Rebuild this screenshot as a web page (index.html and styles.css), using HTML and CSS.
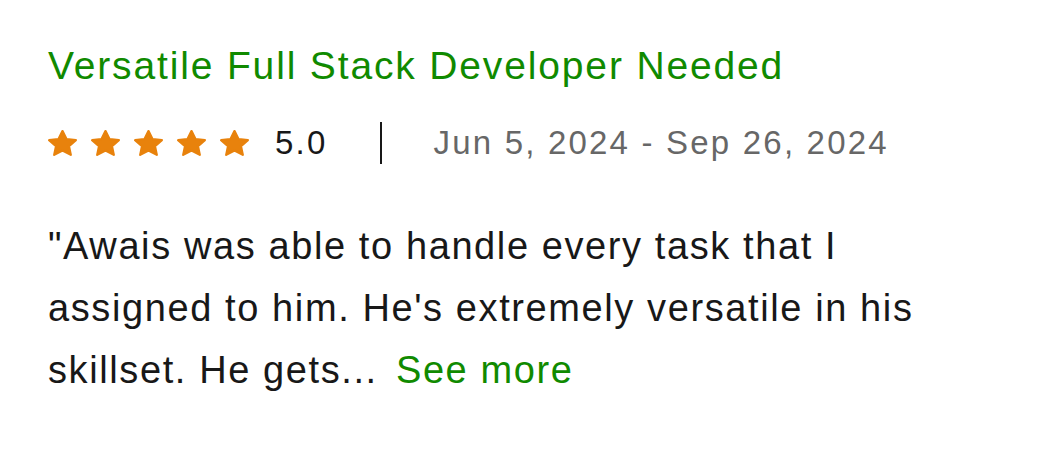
FILE: index.html
```html
<!DOCTYPE html>
<html>
<head>
<meta charset="utf-8">
<link rel="stylesheet" href="styles.css">
</head>
<body>
<div class="card">
  <h2 class="title">Versatile Full Stack Developer Needed</h2>
  <div class="meta">
    <div class="stars">
      <svg class="star" viewBox="1.7 1.4 20.6 19.7" preserveAspectRatio="none"><path d="M12 2.2l2.9 6.1 6.6.8-4.9 4.6 1.3 6.6L12 17l-5.9 3.3 1.3-6.6L2.5 9.1l6.6-.8z"/></svg>
      <svg class="star" viewBox="1.7 1.4 20.6 19.7" preserveAspectRatio="none"><path d="M12 2.2l2.9 6.1 6.6.8-4.9 4.6 1.3 6.6L12 17l-5.9 3.3 1.3-6.6L2.5 9.1l6.6-.8z"/></svg>
      <svg class="star" viewBox="1.7 1.4 20.6 19.7" preserveAspectRatio="none"><path d="M12 2.2l2.9 6.1 6.6.8-4.9 4.6 1.3 6.6L12 17l-5.9 3.3 1.3-6.6L2.5 9.1l6.6-.8z"/></svg>
      <svg class="star" viewBox="1.7 1.4 20.6 19.7" preserveAspectRatio="none"><path d="M12 2.2l2.9 6.1 6.6.8-4.9 4.6 1.3 6.6L12 17l-5.9 3.3 1.3-6.6L2.5 9.1l6.6-.8z"/></svg>
      <svg class="star" viewBox="1.7 1.4 20.6 19.7" preserveAspectRatio="none"><path d="M12 2.2l2.9 6.1 6.6.8-4.9 4.6 1.3 6.6L12 17l-5.9 3.3 1.3-6.6L2.5 9.1l6.6-.8z"/></svg>
    </div>
    <span class="score">5.0</span>
    <span class="divider"></span>
    <span class="dates">Jun 5, 2024 - Sep 26, 2024</span>
  </div>
  <p class="review"><span class="quote">"Awais was able to handle every task that I assigned to him. He's extremely versatile in his skillset. He gets...</span> <a class="more" href="#">See more</a></p>
</div>
</body>
</html>
```
FILE: styles.css
```css
html, body {
  margin: 0;
  padding: 0;
  background: #ffffff;
}
body {
  font-family: "Liberation Sans", Arial, sans-serif;
  color: #181818;
}
.card {
  padding: 40px 48px 0 48px;
}
.title {
  margin: 0;
  font-size: 39px;
  letter-spacing: 1.85px;
  font-weight: normal;
  color: #108a00;
  line-height: 52px;
}
.meta {
  display: flex;
  align-items: center;
  margin-top: 29px;
  height: 44px;
}
.stars {
  display: flex;
  gap: 14px;
}
.star {
  display: block;
  width: 29px;
  height: 26px;
  fill: #e8820c;
  stroke: #e8820c;
  stroke-width: 1.6;
  stroke-linejoin: round;
}
.score {
  font-size: 33px;
  letter-spacing: 2.2px;
  margin-left: 26px;
}
.divider {
  width: 2px;
  height: 42px;
  background: #181818;
  margin-left: 53px;
}
.dates {
  font-size: 33px;
  letter-spacing: 2.2px;
  color: #676767;
  margin-left: 51px;
}
.review {
  margin: 50px 0 0 0;
  width: 900px;
  font-size: 38px;
  letter-spacing: 1.6px;
  line-height: 62px;
}
.more {
  color: #108a00;
  text-decoration: none;
  margin-left: 6px;
}
```
